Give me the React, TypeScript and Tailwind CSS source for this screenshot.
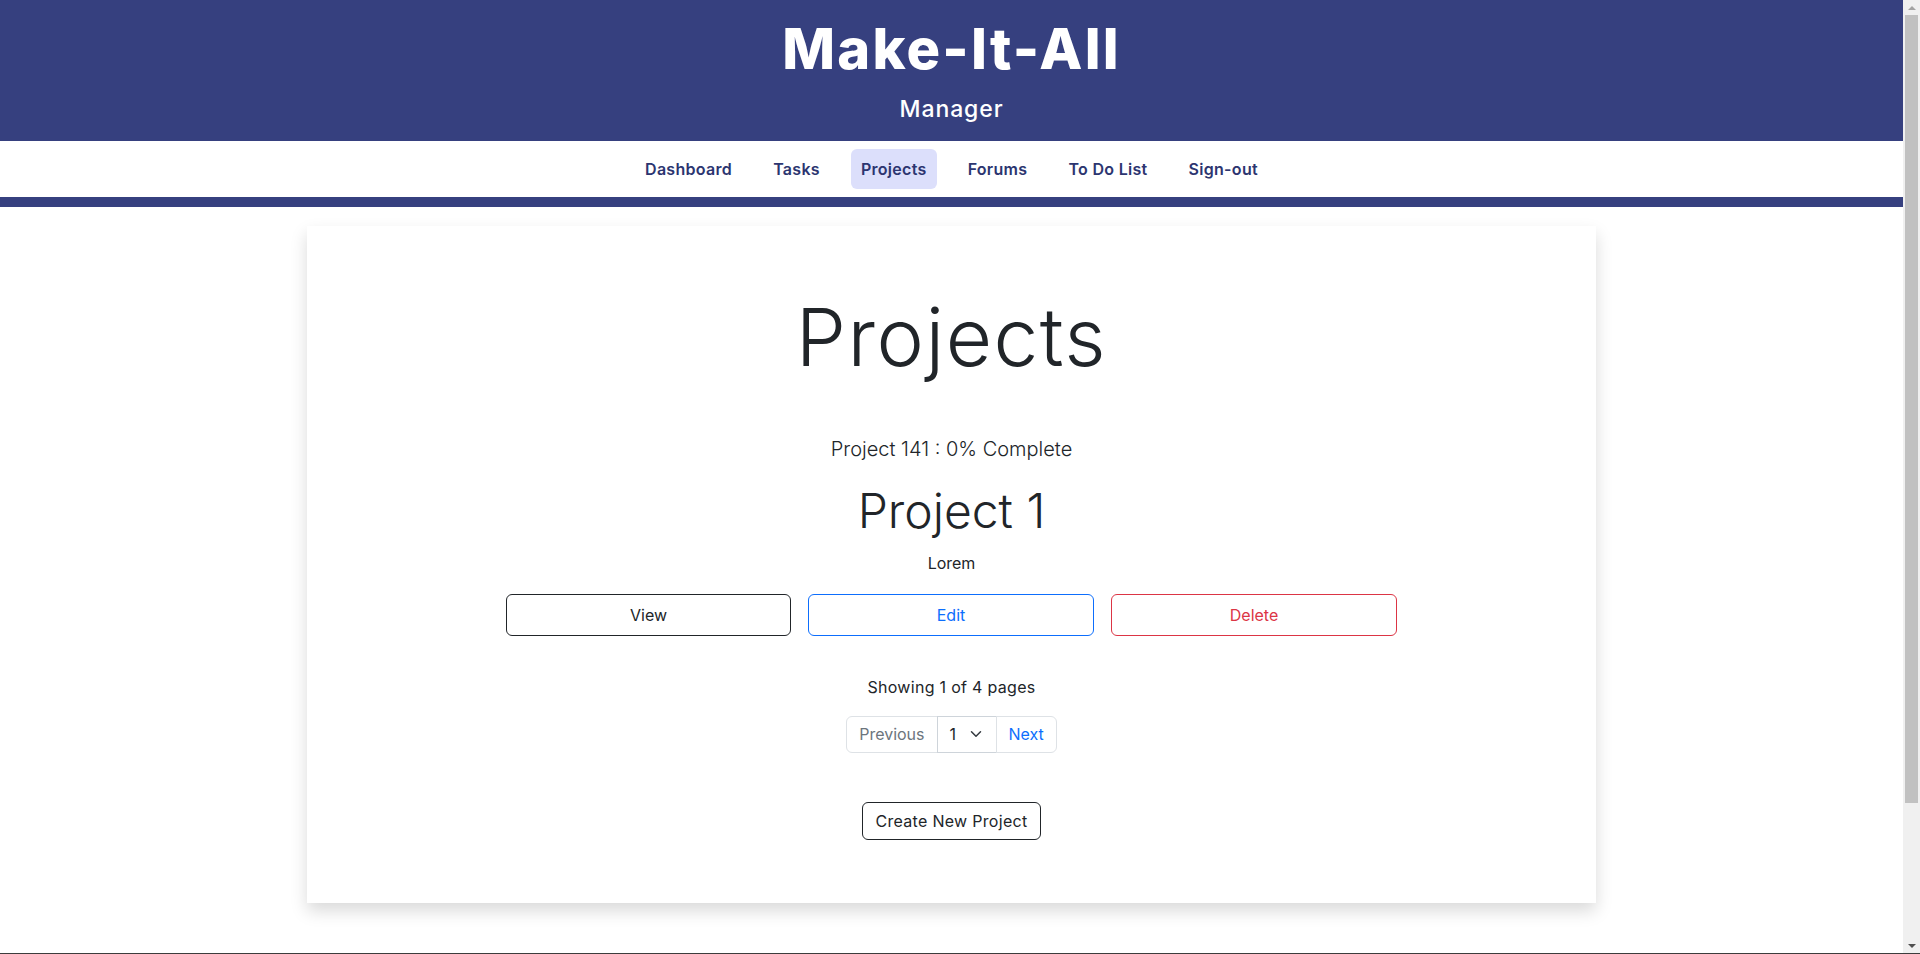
import React from "react";

const navItems = ["Dashboard", "Tasks", "Projects", "Forums", "To Do List", "Sign-out"];

function Header() {
  return (
    <header className="bg-[#36407f] h-[141px] flex flex-col items-center text-white">
      <h1 className="mt-[16px] text-[56px] leading-[1.2] font-extrabold tracking-[2.2px]">Make-It-All</h1>
      <div className="mt-[13px] text-[23px] leading-[1.2] font-medium tracking-[0.9px]">Manager</div>
    </header>
  );
}

function Navbar() {
  return (
    <nav className="bg-white h-[56px] flex justify-center items-center gap-[21px]">
      {navItems.map((item) => (
        <a
          key={item}
          className={
            "px-[10px] h-[40px] flex items-center rounded-[6px] text-[16px] font-semibold tracking-[0.3px] text-[#2c3570] cursor-pointer " +
            (item === "Projects" ? "bg-[#dcdffb]" : "")
          }
        >
          {item}
        </a>
      ))}
    </nav>
  );
}

function Pagination() {
  return (
    <div className="mt-[17px] flex h-[37px] text-[16px] leading-[24px]">
      <button className="px-[12px] border border-[#dee2e6] rounded-l-[6px] text-[#6c757d] bg-white">Previous</button>
      <div className="w-[60px] border border-[#ced4da] -ml-px flex items-center justify-between pl-[12px] pr-[12px] text-[#212529]">
        <span>1</span>
        <svg width="16" height="12" viewBox="0 0 16 16" fill="none">
          <path d="M2 5l6 6 6-6" stroke="#343a40" strokeWidth="2" strokeLinecap="round" strokeLinejoin="round" />
        </svg>
      </div>
      <button className="-ml-px px-[12px] border border-[#dee2e6] rounded-r-[6px] text-[#0d6efd] bg-white">Next</button>
    </div>
  );
}

// the browser's scrollbar, drawn since the headless shot hides it
function FakeScrollbar() {
  return (
    <div className="w-[17px] bg-[#f0f0f0] flex flex-col items-center">
      <div className="h-[15px] flex items-center justify-center">
        <div className="w-0 h-0 border-x-[4px] border-x-transparent border-b-[4px] border-b-[#a3a3a3]" />
      </div>
      <div className="w-[13px] h-[788px] bg-[#c1c1c1]" />
      <div className="flex-1" />
      <div className="h-[15px] flex items-center justify-center">
        <div className="w-0 h-0 border-x-[4px] border-x-transparent border-t-[4px] border-t-[#505050]" />
      </div>
    </div>
  );
}

export default function App() {
  return (
    <div className="h-screen overflow-hidden flex border-b border-[#3c3c3c] bg-white font-['Inter','Noto_Sans',sans-serif] text-[#212529]">
      <div className="flex-1 overflow-hidden">
        <Header />
        <Navbar />
        <div className="h-[10px] bg-[#36407f]" />
        <main className="mt-[19px] mb-[209px] mx-auto w-[1289px] bg-white shadow-[0_8px_16px_rgba(0,0,0,0.15)] pt-[63px] pb-[63px] flex flex-col items-center">
          <h2 className="text-[80px] leading-[1.2] font-light tracking-[1.5px]">Projects</h2>
          <p className="mt-[49px] text-[20px] leading-[1.5] font-light">Project 141 : 0% Complete</p>
          <h3 className="mt-[18px] text-[48px] leading-[1.2] font-light">Project 1</h3>
          <p className="mt-[11px] text-[16px] leading-[1.5]">Lorem</p>
          <div className="mt-[19px] flex gap-[17px]">
            <button className="w-[285px] h-[42px] rounded-[6px] border border-[#212529] text-[#212529] text-[16px]">View</button>
            <button className="w-[286px] h-[42px] rounded-[6px] border border-[#0d6efd] text-[#0d6efd] text-[16px]">Edit</button>
            <button className="w-[286px] h-[42px] rounded-[6px] border border-[#dc3545] text-[#dc3545] text-[16px]">Delete</button>
          </div>
          <p className="mt-[39px] text-[16px] leading-[1.5] tracking-[0.3px]">Showing 1 of 4 pages</p>
          <Pagination />
          <button className="mt-[49px] h-[38px] px-[12px] rounded-[6px] border border-[#212529] text-[16px] tracking-[0.3px] text-[#212529]">
            Create New Project
          </button>
        </main>
      </div>
      <FakeScrollbar />
    </div>
  );
}
